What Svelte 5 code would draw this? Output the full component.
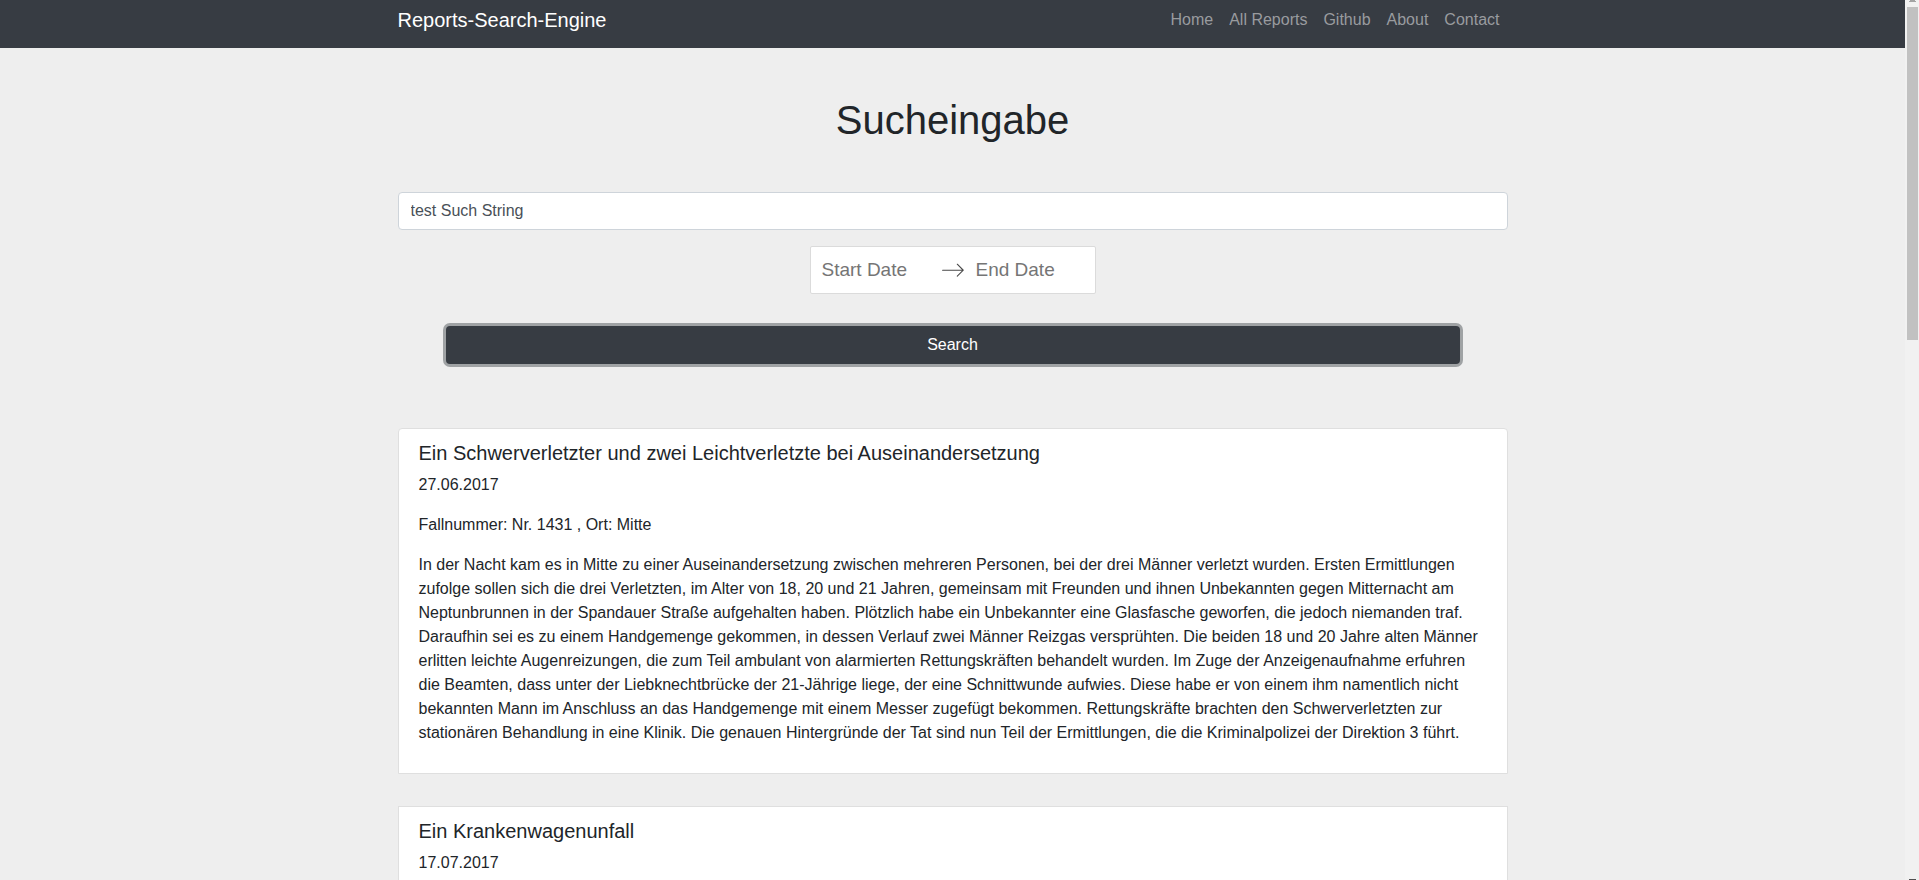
<script>
  const links = ['Home', 'All Reports', 'Github', 'About', 'Contact'];

  const reports = [
    {
      title: 'Ein Schwerverletzter und zwei Leichtverletzte bei Auseinandersetzung',
      date: '27.06.2017',
      details: 'Fallnummer: Nr. 1431 , Ort: Mitte',
      text: 'In der Nacht kam es in Mitte zu einer Auseinandersetzung zwischen mehreren Personen, bei der drei Männer verletzt wurden. Ersten Ermittlungen zufolge sollen sich die drei Verletzten, im Alter von 18, 20 und 21 Jahren, gemeinsam mit Freunden und ihnen Unbekannten gegen Mitternacht am Neptunbrunnen in der Spandauer Straße aufgehalten haben. Plötzlich habe ein Unbekannter eine Glasfasche geworfen, die jedoch niemanden traf. Daraufhin sei es zu einem Handgemenge gekommen, in dessen Verlauf zwei Männer Reizgas versprühten. Die beiden 18 und 20 Jahre alten Männer erlitten leichte Augenreizungen, die zum Teil ambulant von alarmierten Rettungskräften behandelt wurden. Im Zuge der Anzeigenaufnahme erfuhren die Beamten, dass unter der Liebknechtbrücke der 21-Jährige liege, der eine Schnittwunde aufwies. Diese habe er von einem ihm namentlich nicht bekannten Mann im Anschluss an das Handgemenge mit einem Messer zugefügt bekommen. Rettungskräfte brachten den Schwerverletzten zur stationären Behandlung in eine Klinik. Die genauen Hintergründe der Tat sind nun Teil der Ermittlungen, die die Kriminalpolizei der Direktion 3 führt.'
    },
    { title: 'Ein Krankenwagenunfall', date: '17.07.2017' }
  ];

  let query = $state('test Such String');
  let startDate = $state('');
  let endDate = $state('');
</script>

<div class="window">
  <div class="page">
    <header class="navbar">
      <div class="container nav-row">
        <a class="brand" href="#home">Reports-Search-Engine</a>
        <nav>
          {#each links as link}
            <a href="#{link}">{link}</a>
          {/each}
        </nav>
      </div>
    </header>

    <main class="container">
      <h1>Sucheingabe</h1>
      <form onsubmit={(e) => e.preventDefault()}>
        <input class="query" type="text" aria-label="Sucheingabe" bind:value={query} />
        <div class="dates">
          <input type="text" placeholder="Start Date" aria-label="Start Date" bind:value={startDate} />
          <svg viewBox="0 0 1000 1000" aria-hidden="true">
            <path d="M694.4 242.4l249.1 249.1c11 11 11 21 0 32L694.4 772.7c-5 5-10 7-16 7s-11-2-16-7c-11-11-11-21 0-32l210.1-210.1H67.1c-13 0-23-10-23-23s10-23 23-23h805.4L662.4 274.5c-21-21.1 11-53.1 32-32.1z" />
          </svg>
          <input type="text" placeholder="End Date" aria-label="End Date" bind:value={endDate} />
        </div>
        <button type="submit">Search</button>
      </form>

      <section class="results">
        {#each reports as report}
          <article>
            <h2>{report.title}</h2>
            <p>{report.date}</p>
            {#if report.details}<p>{report.details}</p>{/if}
            {#if report.text}<p>{report.text}</p>{/if}
          </article>
        {/each}
      </section>
    </main>
  </div>

  <div class="scrollbar" aria-hidden="true">
    <svg viewBox="0 0 7 2"><path d="M1 0h5v1h1v1H0V1h1z" fill="#a3a3a3" /></svg>
    <div class="track"><div class="thumb"></div></div>
    <svg class="down" viewBox="0 0 7 1"><path d="M0 0h7v1H0z" fill="#505050" /></svg>
  </div>
</div>

<style>
  :global(body) {
    margin: 0;
  }
  .window,
  .window * {
    box-sizing: border-box;
  }
  .window {
    display: grid;
    grid-template-columns: minmax(0, 1fr) 14px;
    height: 100vh;
    background: #eee;
    color: #212529;
    font: 16px/24px 'Liberation Sans', Arial, sans-serif;
  }
  .page {
    overflow-y: auto;
    scrollbar-width: none;
  }
  .container {
    width: 100%;
    max-width: 1140px;
    margin: 0 auto;
    padding: 0 15px;
  }
  .navbar {
    height: 48px;
    background: #373c43;
  }
  .nav-row {
    display: flex;
    justify-content: space-between;
    padding-top: 5px;
  }
  a {
    color: #999b9f;
    text-decoration: none;
  }
  .brand {
    color: #fff;
    font-size: 20px;
    line-height: 30px;
  }
  nav {
    display: flex;
    gap: 16px;
    padding: 3px 8px;
  }
  h1 {
    margin: 0;
    padding: 48px 0;
    font-size: 40px;
    font-weight: 400;
    line-height: 48px;
    text-align: center;
  }
  form {
    display: flex;
    flex-direction: column;
    align-items: center;
  }
  input {
    font-family: inherit;
    outline: 0;
  }
  .query {
    width: 100%;
    height: 38px;
    padding: 6px 12px;
    border: 1px solid #ced4da;
    border-radius: 4px;
    background: #fff;
    color: #495057;
    font-size: 16px;
    line-height: 24px;
  }
  .dates {
    display: flex;
    align-items: center;
    margin-top: 16px;
    border: 1px solid #dbdbdb;
    border-radius: 2px;
    background: #fff;
  }
  .dates input {
    width: 130px;
    height: 46px;
    padding: 11px 11px 9px;
    border: 0;
    border-bottom: 2px solid transparent;
    background: transparent;
    font-size: 19px;
    line-height: 24px;
  }
  .dates input::placeholder {
    color: #757575;
  }
  .dates svg {
    width: 24px;
    height: 24px;
    fill: #484848;
  }
  button {
    width: calc(100% - 96px);
    height: 38px;
    margin-top: 32px;
    border: 0;
    border-radius: 4px;
    background: #373c43;
    box-shadow: 0 0 0 3px #9fa2a4;
    color: #fff;
    font: inherit;
  }
  .results {
    display: grid;
    gap: 32px;
    padding: 64px 0 32px;
  }
  article {
    padding: 12px 20px;
    border: 1px solid #dfdfdf;
    background: #fff;
  }
  article:first-child {
    border-radius: 4px 4px 0 0;
  }
  h2 {
    margin: 0 0 8px;
    font-size: 20px;
    font-weight: 400;
    line-height: 24px;
  }
  p {
    margin: 0 0 16px;
  }
  .scrollbar {
    display: flex;
    flex-direction: column;
    align-items: center;
    background: #f1f1f1;
  }
  .scrollbar svg {
    width: 7px;
    height: 2px;
  }
  .scrollbar .down {
    height: 1px;
  }
  .track {
    flex: 1;
    width: 11px;
    padding-top: 5px;
  }
  .thumb {
    height: 38.2%;
    background: #c1c1c1;
  }
</style>
